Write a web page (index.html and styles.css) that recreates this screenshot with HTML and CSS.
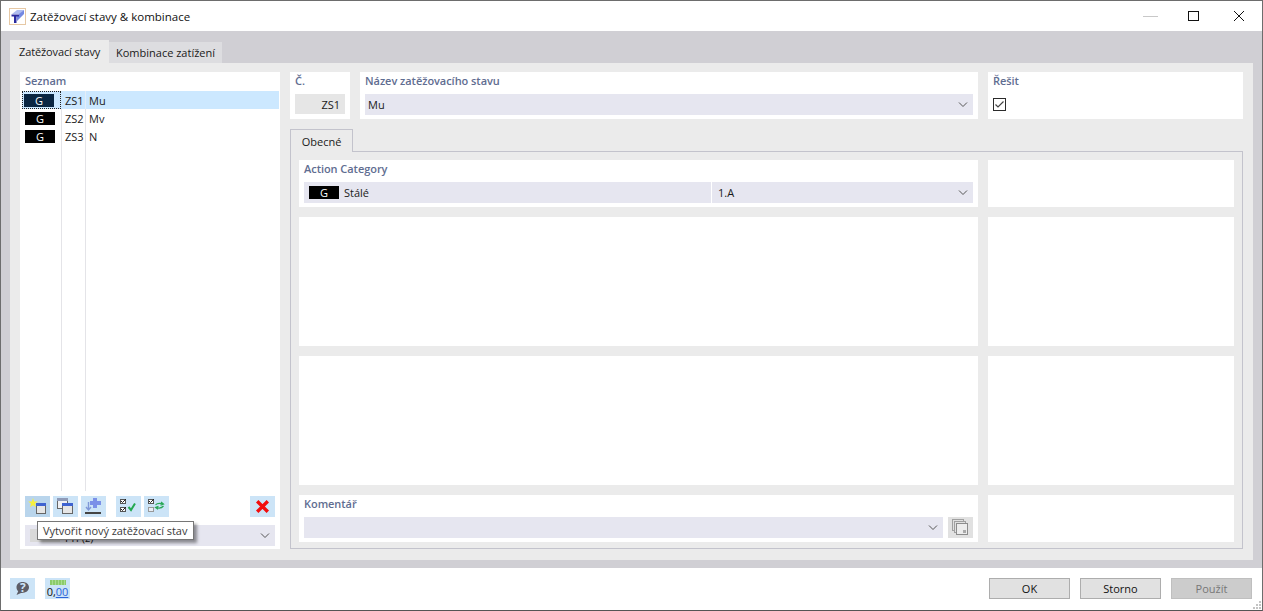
FILE: index.html
```html
<!DOCTYPE html>
<html lang="cs">
<head>
<meta charset="utf-8">
<title>Zatěžovací stavy &amp; kombinace</title>
<link rel="stylesheet" href="styles.css">
</head>
<body>
<div class="window">
  <header class="titlebar">
    <svg class="app-icon" width="17" height="17" viewBox="0 0 17 17">
      <rect x="0.5" y="0.5" width="16" height="16" fill="#fff" stroke="#e6c8a4"/>
      <path d="M3 6 L8 2 H15 L11 6 Z" fill="#aebcf0"/>
      <path d="M10 6 L15 2 V6 L8 13 V8 H10 Z" fill="#7488e2"/>
      <path d="M2.5 6.5 H10 V8.5 H7.5 V15 H5 V8.5 H2.5 Z" fill="#2a2aa0"/>
    </svg>
    <span class="title">Zatěžovací stavy &amp; kombinace</span>
    <div class="win-controls">
      <svg class="win-btn" width="16" height="11" viewBox="0 0 16 11"><path d="M0 5.5 H15" stroke="#c8c8c8"/></svg>
      <svg class="win-btn" width="16" height="11" viewBox="0 0 16 11"><rect x="0.5" y="0.5" width="10" height="9" fill="none" stroke="#111"/></svg>
      <svg class="win-btn" width="16" height="11" viewBox="0 0 16 11"><path d="M1 0 L11 10 M11 0 L1 10" stroke="#111"/></svg>
    </div>
  </header>

  <main class="main">
    <nav class="tabs">
      <div class="tab tab-active">Zatěžovací stavy</div>
      <div class="tab">Kombinace zatížení</div>
    </nav>
    <div class="panel">
      <section class="list-card">
        <div class="label list-label">Seznam</div>
        <div class="list">
          <div class="row row-selected">
            <div class="badge-cell"><span class="badge badge-selected">G</span></div>
            <span class="row-no">ZS1</span><span class="row-name">Mu</span>
          </div>
          <div class="row">
            <div class="badge-cell"><span class="badge">G</span></div>
            <span class="row-no">ZS2</span><span class="row-name">Mv</span>
          </div>
          <div class="row">
            <div class="badge-cell"><span class="badge">G</span></div>
            <span class="row-no">ZS3</span><span class="row-name">N</span>
          </div>
        </div>
        <div class="toolbar">
          <button class="tool tool-hover">
            <svg width="25" height="21" viewBox="0 0 25 21">
              <rect x="11.5" y="7.5" width="9" height="10" fill="#e6e6e6" stroke="#666"/>
              <rect x="11" y="7" width="10" height="3" fill="#3f63d0"/>
              <path d="M8 2 L9.2 5.4 L12.8 5.6 L10 7.8 L11 11.2 L8 9.2 L5 11.2 L6 7.8 L3.2 5.6 L6.8 5.4 Z" fill="#f6ef3e"/>
            </svg>
          </button>
          <button class="tool tool-copy">
            <svg width="25" height="21" viewBox="0 0 25 21">
              <rect x="4.5" y="2.5" width="10" height="10" fill="#eef0f4" stroke="#666"/>
              <rect x="4" y="2" width="11" height="3" fill="#8f9bb8"/>
              <rect x="9.5" y="7.5" width="10" height="10" fill="#e6e6e6" stroke="#666"/>
              <rect x="9" y="7" width="11" height="3" fill="#3f63d0"/>
            </svg>
          </button>
          <button class="tool tool-import">
            <svg width="25" height="21" viewBox="0 0 25 21">
              <path d="M12 2 H16 V5 H20 V9 H16 V12 H12 V9 H9 V5 H12 Z" fill="#7b90e8"/>
              <path d="M7.5 6 V13.5 M5 11 L7.5 14 L10 11" stroke="#7f97d8" stroke-width="1.4" fill="none"/>
              <rect x="4" y="16" width="16" height="2" fill="#444"/>
            </svg>
          </button>
          <button class="tool tool-gap">
            <svg width="25" height="21" viewBox="0 0 25 21">
              <rect x="4.5" y="3.5" width="5" height="4" fill="#fff" stroke="#555"/>
              <path d="M5 5 L6.5 6.5 L10 3" stroke="#222" fill="none"/>
              <rect x="4.5" y="11.5" width="5" height="4" fill="#fff" stroke="#555"/>
              <path d="M5 13 L6.5 14.5 L10 11" stroke="#222" fill="none"/>
              <path d="M12.5 11 L15 14 L19 7.5" stroke="#22a850" stroke-width="2" fill="none"/>
            </svg>
          </button>
          <button class="tool tool-swap">
            <svg width="25" height="21" viewBox="0 0 25 21">
              <rect x="4.5" y="3.5" width="5" height="4" fill="#fff" stroke="#555"/>
              <path d="M5 5 L6.5 6.5 L10 3" stroke="#222" fill="none"/>
              <rect x="4.5" y="11.5" width="5" height="4" fill="#e8eef6" stroke="#999"/>
              <path d="M11.5 9 Q13.5 6.5 18.5 7.8 M17 6 L19.5 8 L16.5 9.2" stroke="#2aa858" stroke-width="1.2" fill="none"/>
              <path d="M19.5 10 Q17 13 12.5 11.6 M14 13.4 L11.5 11.4 L14.5 10.2" stroke="#2aa858" stroke-width="1.2" fill="none"/>
            </svg>
          </button>
          <button class="tool tool-delete">
            <svg width="25" height="21" viewBox="0 0 25 21">
              <path d="M7.2 5.2 L17.8 15.8 M17.8 5.2 L7.2 15.8" stroke="#f20d0d" stroke-width="3.4"/>
            </svg>
          </button>
        </div>
        <div class="combo filter-combo">
          <span class="filter-swatch"></span>
          <span class="filter-text">Pří (z)</span>
          <svg class="chevron" width="10" height="5" viewBox="0 0 10 5"><path d="M1 0.5 L5 4.5 L9 0.5" fill="none" stroke="#555"/></svg>
        </div>
        <div class="tooltip">Vytvořit nový zatěžovací stav</div>
      </section>

      <section class="detail">
        <div class="head-row">
          <div class="card">
            <div class="label">Č.</div>
            <div class="field-no">ZS1</div>
          </div>
          <div class="card">
            <div class="label">Název zatěžovacího stavu</div>
            <div class="combo">
              <span class="combo-text">Mu</span>
              <svg class="chevron" width="10" height="5" viewBox="0 0 10 5"><path d="M1 0.5 L5 4.5 L9 0.5" fill="none" stroke="#555"/></svg>
            </div>
          </div>
          <div class="card">
            <div class="label">Řešit</div>
            <div class="check">
              <svg width="13" height="13" viewBox="0 0 13 13">
                <rect x="0.5" y="0.5" width="12" height="12" fill="#fff" stroke="#2b2b2b"/>
                <path d="M2.5 6.5 L5 9 L10.5 3.5" fill="none" stroke="#444" stroke-width="1.2"/>
              </svg>
            </div>
          </div>
        </div>

        <div class="inner-tab">Obecné</div>
        <div class="frame">
          <div class="card">
            <div class="label">Action Category</div>
            <div class="combo">
              <span class="badge combo-badge">G</span>
              <span class="cat-name">Stálé</span>
              <span class="cat-code">1.A</span>
              <svg class="chevron" width="10" height="5" viewBox="0 0 10 5"><path d="M1 0.5 L5 4.5 L9 0.5" fill="none" stroke="#555"/></svg>
            </div>
          </div>
          <div class="card"></div>
          <div class="card"></div>
          <div class="card"></div>
          <div class="card"></div>
          <div class="card"></div>
          <div class="card">
            <div class="label">Komentář</div>
            <div class="comment-row">
              <div class="combo comment-combo">
                <svg class="chevron" width="10" height="5" viewBox="0 0 10 5"><path d="M1 0.5 L5 4.5 L9 0.5" fill="none" stroke="#555"/></svg>
              </div>
              <div class="comment-btn">
                <svg width="17" height="17" viewBox="0 0 17 17">
                  <rect x="0.5" y="0.5" width="11" height="11" fill="#e0e0e0" stroke="#a0a0a0"/>
                  <rect x="2.5" y="2.5" width="11" height="11" fill="#e0e0e0" stroke="#a0a0a0"/>
                  <rect x="4.5" y="4.5" width="11" height="11" fill="#ececec" stroke="#8c8c8c"/>
                  <rect x="11" y="11" width="3" height="3" fill="#aaa"/>
                </svg>
              </div>
            </div>
          </div>
          <div class="card"></div>
        </div>
      </section>
    </div>
  </main>

  <footer class="footer">
    <button class="tool help-btn">
      <svg width="25" height="21" viewBox="0 0 25 21">
        <path d="M12.5 4 C8.8 4 6.5 6.2 6.5 9.3 C6.5 11 7.2 12.3 8.2 13.2 L6.5 17 L11 15 C15.5 15.3 19 13 19 9.3 C19 6.2 16.2 4 12.5 4 Z" fill="#5d5d66"/>
        <text x="12.8" y="13.5" class="help-mark">?</text>
      </svg>
    </button>
    <button class="tool units-btn">
      <span class="ruler"></span>
      <span class="units-text">0,<u>00</u></span>
    </button>
    <div class="actions">
      <button class="action">OK</button>
      <button class="action">Storno</button>
      <button class="action action-disabled">Použít</button>
    </div>
    <svg class="grip" width="11" height="11" viewBox="0 0 11 11">
      <path d="M8 2 h2 v2 h-2 Z M5 5 h2 v2 h-2 Z M8 5 h2 v2 h-2 Z M2 8 h2 v2 h-2 Z M5 8 h2 v2 h-2 Z M8 8 h2 v2 h-2 Z" fill="#c4c4c4"/>
    </svg>
  </footer>
</div>
</body>
</html>
```
FILE: styles.css
```css
* { box-sizing: border-box; }
html, body { margin: 0; height: 100%; }
body {
  font-family: "Open Sans", "Noto Sans", "Liberation Sans", sans-serif;
  font-size: 11px;
  color: #1a1a1a;
  background: #fff;
  overflow: hidden;
}
button { font: inherit; color: inherit; padding: 0; margin: 0; }

.window {
  width: 1263px;
  height: 611px;
  border: 1px solid #6d6d6d;
  border-bottom-color: #555;
  display: flex;
  flex-direction: column;
  background: #fff;
  position: relative;
}

/* Title bar */
.titlebar {
  height: 30px;
  flex: none;
  display: flex;
  align-items: center;
  padding-left: 8px;
}
.app-icon { flex: none; }
.title { margin-left: 4px; font-size: 11.5px; color: #111; }
.win-controls { margin-left: auto; display: flex; gap: 29px; padding-right: 13px; }

/* Main area */
.main {
  flex: 1;
  min-height: 0;
  background: #d0cfd4;
  padding: 9px 9px 8px;
  display: flex;
  flex-direction: column;
}
.tabs { display: flex; height: 23px; flex: none; align-items: flex-end; }
.tab {
  height: 21px;
  padding: 0 7px;
  background: #dddde0;
  display: flex;
  align-items: center;
  color: #1a1a1a;
}
.tab-active {
  height: 23px;
  width: 99px;
  padding: 0 0 0 9px;
  background: #ebebeb;
  letter-spacing: -.12px;
}

.panel {
  flex: 1;
  min-height: 0;
  background: #ebebeb;
  padding: 9px 10px 11px;
  display: grid;
  grid-template-columns: 260px 953px;
  column-gap: 10px;
}

.card { background: #fff; padding: 0 5px; min-width: 0; }
.label {
  height: 22px;
  padding-bottom: 6px;
  display: flex;
  align-items: center;
  font-weight: 600;
  color: #5f6d91;
  letter-spacing: -.05px;
}

/* List card */
.list-card {
  background: #fff;
  position: relative;
  display: flex;
  flex-direction: column;
  padding: 0 5px 3px;
}
.list-label { height: 19px; padding-bottom: 2px; }
.list {
  flex: 1;
  min-height: 0;
  margin: 0 -4px 0 -3px;
  background-image:
    linear-gradient(#e4e4e8, #e4e4e8),
    linear-gradient(#e4e4e8, #e4e4e8);
  background-size: 1px 100%, 1px 100%;
  background-position: 39px 0, 63px 0;
  background-repeat: no-repeat;
}
.row { height: 18px; display: flex; align-items: center; }
.row-selected { background: linear-gradient(#e4eef8, #e4eef8) 63px 0 / 1px 100% no-repeat, #cce8ff; }
.badge-cell {
  width: 39px;
  height: 18px;
  flex: none;
  display: flex;
  align-items: center;
  padding-left: 2px;
  border: 1px solid transparent;
}
.row-selected .badge-cell { border: 1px dotted #222; padding-left: 1px; }
.badge {
  width: 30px;
  height: 13px;
  background: #000;
  color: #fff;
  display: inline-flex;
  align-items: center;
  justify-content: center;
  flex: none;
  font-size: 11px;
}
.badge-selected { background: #0a2642; }
.row-no { width: 24px; margin-left: 1px; padding-left: 3px; flex: none; }
.row-name { margin-left: 3px; }

.toolbar { display: flex; height: 21px; flex: none; margin-top: 5px; }
.tool {
  width: 25px;
  height: 21px;
  background: #cce4f7;
  border: 0;
  flex: none;
  display: flex;
  align-items: center;
  justify-content: center;
}
.tool-hover { background: #b9d5ec; }
.tool-copy { margin-left: 3px; }
.tool-import { margin-left: 3px; }
.tool-gap { margin-left: 10px; }
.tool-swap { margin-left: 3px; }
.tool-delete { margin-left: auto; }

.combo {
  height: 21px;
  background: #e6e6f0;
  display: flex;
  align-items: center;
  padding-left: 5px;
}
.chevron { margin-left: auto; margin-right: 5px; flex: none; }
.filter-combo { margin-top: 8px; flex: none; }
.filter-swatch { width: 30px; height: 13px; background: #d9d9d9; flex: none; }
.filter-text { margin-left: 5px; padding-top: 3px; }

.tooltip {
  position: absolute;
  left: 17px;
  top: 449px;
  height: 19px;
  width: 157px;
  background: #fff;
  border: 1px solid #767676;
  box-shadow: 3px 3px 3px rgba(0, 0, 0, .4);
  display: flex;
  align-items: center;
  padding-left: 5px;
  color: #3a3a3a;
  white-space: nowrap;
  letter-spacing: -.05px;
}

/* Detail */
.detail { display: flex; flex-direction: column; min-width: 0; }
.head-row {
  display: grid;
  grid-template-columns: 60px 618px 255px;
  column-gap: 10px;
  height: 47px;
  flex: none;
}
.field-no {
  height: 20px;
  background: #e6e6e6;
  display: flex;
  align-items: center;
  justify-content: flex-end;
  padding-right: 5px;
}
.combo-text { margin-left: -2px; }
.check { padding-top: 4px; line-height: 0; }

.inner-tab {
  margin-top: 10px;
  width: 63px;
  height: 23px;
  flex: none;
  border: 1px solid #c3c3cc;
  border-bottom: 0;
  display: flex;
  align-items: center;
  justify-content: center;
  position: relative;
  z-index: 1;
  background: #ebebeb;
}
.frame {
  flex: 1;
  min-height: 0;
  margin-top: -1px;
  border: 1px solid #c3c3cc;
  padding: 8px 8px 6px;
  display: grid;
  grid-template-columns: 679px 246px;
  grid-template-rows: 47px 129px 129px 47px;
  gap: 10px;
}
.combo-badge { margin-right: 5px; }
.cat-name { width: 367px; }
.cat-code { border-left: 1px solid #fff; padding-left: 6px; height: 21px; display: flex; align-items: center; }
.comment-row { display: flex; gap: 5px; }
.comment-combo { flex: 1; }
.comment-btn {
  width: 25px;
  height: 21px;
  background: #e1e1e1;
  display: flex;
  align-items: center;
  justify-content: center;
}

/* Footer */
.footer {
  height: 42px;
  flex: none;
  display: flex;
  align-items: flex-start;
  padding: 10px 0 0 9px;
  position: relative;
}
.units-btn {
  margin-left: 10px;
  flex-direction: column;
  justify-content: flex-start;
  padding-top: 2px;
}
.ruler {
  width: 16px;
  height: 5px;
  flex: none;
  background: repeating-linear-gradient(90deg, #8ccb6a 0 2px, #a9dc90 2px 3px);
}
.units-text { font-size: 11px; line-height: 13px; color: #111; }
.units-text u { color: #2b63d8; }
.help-mark { font-size: 12px; font-weight: 700; fill: #cce4f7; text-anchor: middle; }
.actions { margin-left: auto; display: flex; gap: 10px; padding-right: 10px; }
.action {
  width: 81px;
  height: 21px;
  background: #e1e1e1;
  border: 1px solid #adadad;
  color: #111;
}
.action-disabled { background: #cccccc; border-color: #bfbfbf; color: #777; }
.grip { position: absolute; right: 0; bottom: 0; }
```
